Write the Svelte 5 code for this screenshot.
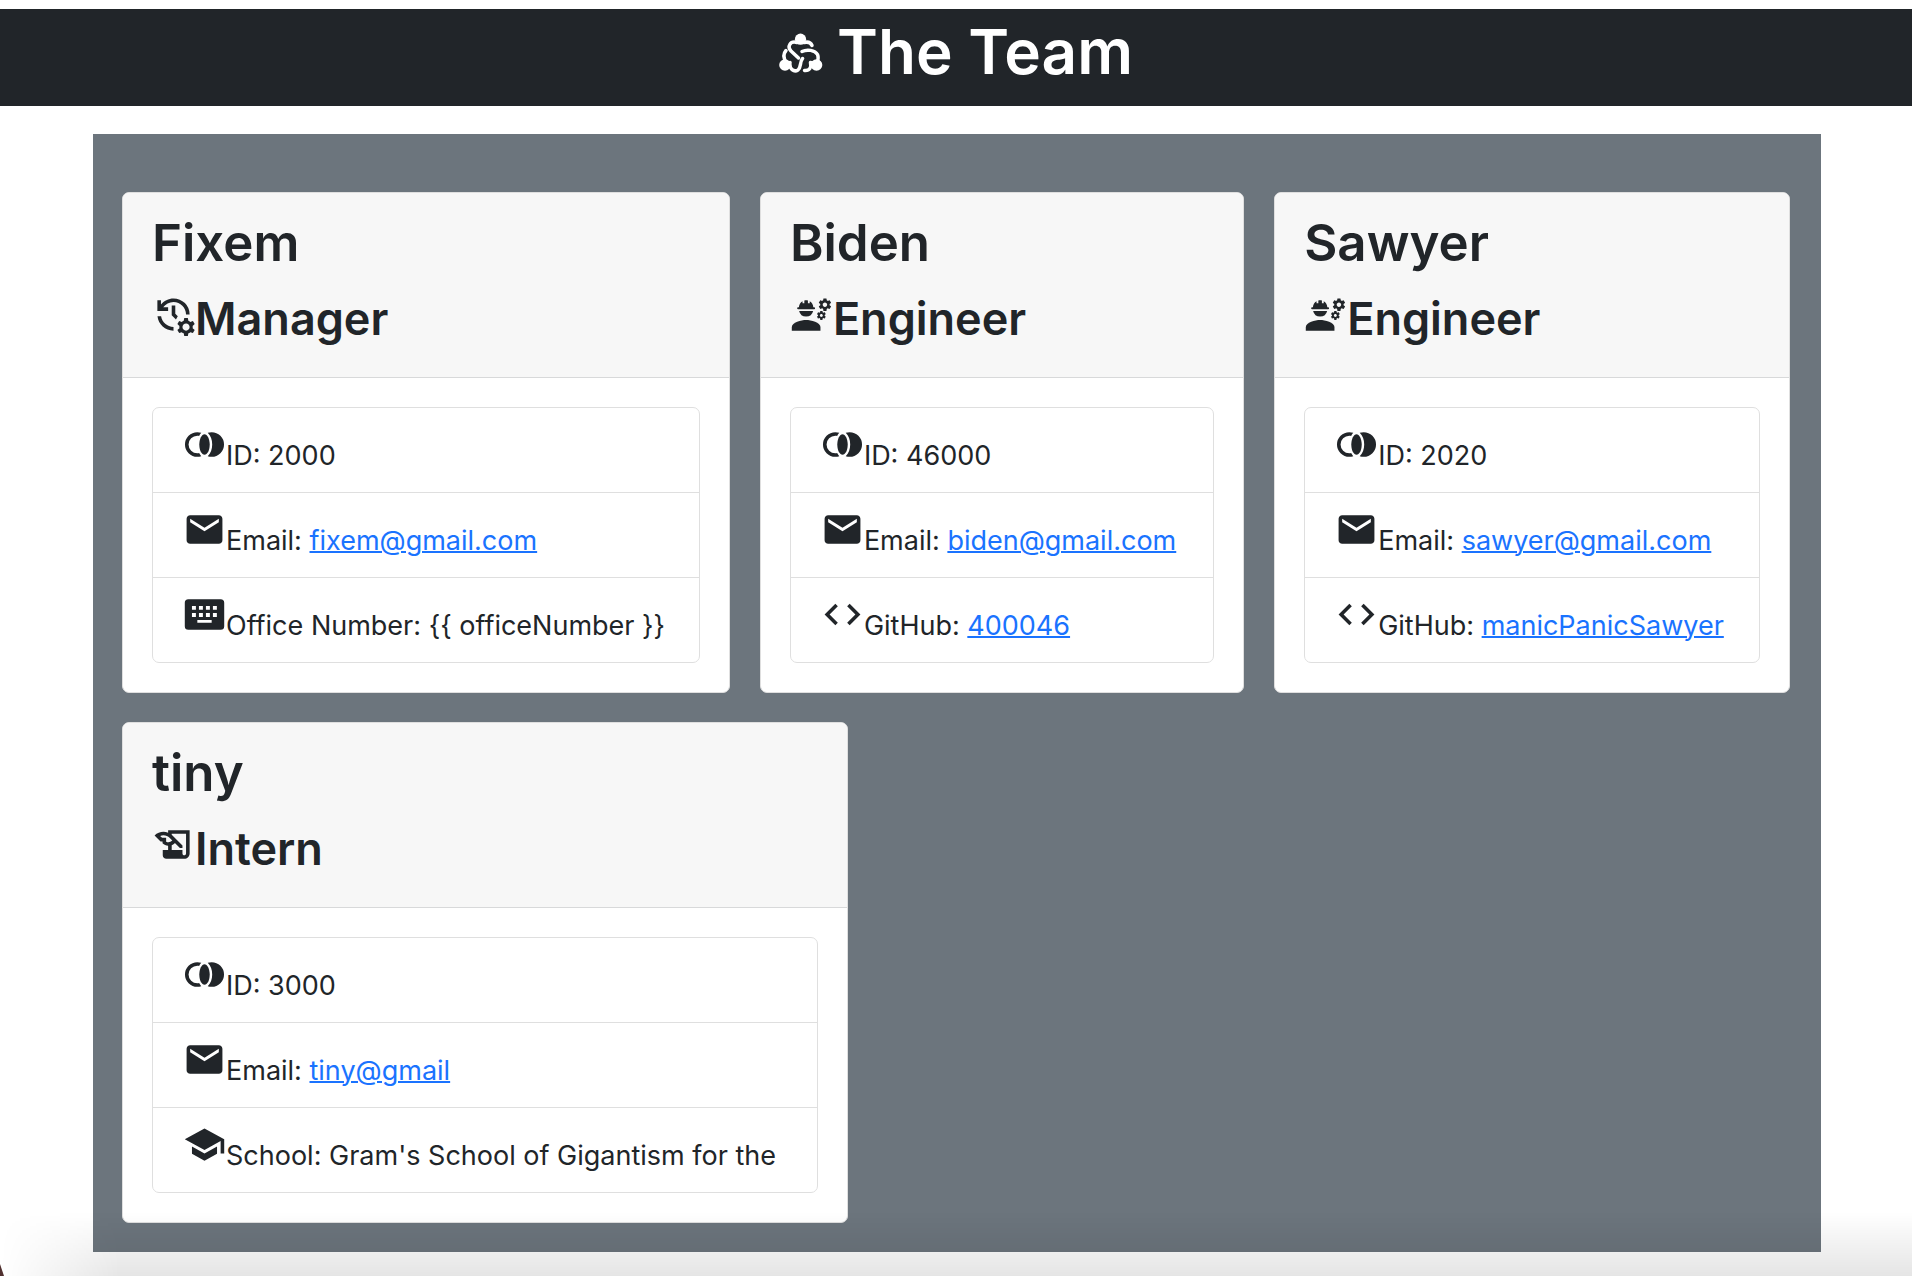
<script>
  const icons = {
    manager: [
      'M22.69 18.37l1.14-1-1-1.73-1.45.49c-.32-.27-.68-.48-1.08-.63L20 14h-2l-.3 1.49c-.4.15-.76.36-1.08.63l-1.45-.49-1 1.73 1.14 1c-.08.5-.08.76 0 1.26l-1.14 1 1 1.73 1.45-.49c.32.27.68.48 1.08.63L18 24h2l.3-1.49c.4-.15.76-.36 1.08-.63l1.45.49 1-1.73-1.14-1c.08-.51.08-.77 0-1.27zM19 21c-1.1 0-2-.9-2-2s.9-2 2-2 2 .9 2 2-.9 2-2 2z',
      'M11 7v5.41l2.36 2.36 1.04-1.79-1.4-1.39V7h-2zm10 5a9 9 0 0 0-9-9C9.17 3 6.65 4.32 5 6.36V4H3v6h6V8H6.26C7.53 6.19 9.63 5 12 5c3.86 0 7 3.14 7 7h2zm-9 6.98c-3.5-.1-6.4-2.6-6.92-5.98H3.06c.5 4.5 4.31 8 8.94 8z'
    ],
    engineer: [
      'M9 15c-2.67 0-8 1.34-8 4v2h16v-2c0-2.66-5.33-4-8-4z',
      'M22.1 6.84c.01-.11.02-.22.02-.34s-.01-.23-.03-.34l.74-.58c.07-.05.08-.15.04-.22l-.7-1.21c-.04-.08-.14-.1-.21-.08l-.86.35c-.18-.14-.38-.25-.59-.34l-.13-.93c-.02-.09-.09-.15-.18-.15h-1.4c-.09 0-.16.06-.17.15l-.13.93c-.21.09-.41.21-.59.34l-.87-.35c-.08-.03-.17 0-.21.08l-.7 1.21c-.04.08-.03.17.04.22l.74.58c-.02.11-.03.23-.03.34s.01.23.03.34l-.74.58c-.07.05-.08.15-.04.22l.7 1.21c.04.08.14.1.21.08l.87-.35c.18.14.38.25.59.34l.13.93c.01.09.08.15.17.15h1.4c.09 0 .16-.06.17-.15l.13-.93c.21-.09.41-.21.59-.34l.87.35c.08.03.17 0 .21-.08l.7-1.21c.04-.08.03-.17-.04-.22l-.73-.58zm-2.6.91c-.69 0-1.25-.56-1.25-1.25s.56-1.25 1.25-1.25 1.25.56 1.25 1.25-.56 1.25-1.25 1.25z',
      'M19.92 11.68l-.5-.87c-.03-.06-.1-.08-.15-.06l-.62.25c-.13-.1-.27-.18-.42-.24l-.09-.66c-.02-.06-.08-.1-.14-.1h-1c-.06 0-.11.04-.12.11l-.09.66c-.15.06-.29.15-.42.24l-.62-.25c-.06-.02-.12 0-.15.06l-.5.87c-.03.06-.02.12.03.16l.53.41c-.01.08-.02.16-.02.24 0 .08.01.17.02.24l-.53.41c-.05.04-.06.11-.03.16l.5.87c.03.06.1.08.15.06l.62-.25c.13.1.27.18.42.24l.09.66c.01.07.06.11.12.11h1c.06 0 .12-.04.12-.11l.09-.66c.15-.06.29-.15.42-.24l.62.25c.06.02.12 0 .15-.06l.5-.87c.03-.06.02-.12-.03-.16l-.52-.41c.01-.08.02-.16.02-.24 0-.08-.01-.17-.02-.24l.53-.41c.05-.04.06-.11.04-.17zm-2.42 1.65c-.46 0-.83-.38-.83-.83 0-.46.38-.83.83-.83s.83.38.83.83c0 .46-.37.83-.83.83z',
      'M4.5 9a.5.5 0 0 1 0-1H5c0-1.48.81-2.75 2-3.45v1.2h1V4.14c.32-.08.65-.14 1-.14s.68.06 1 .14v1.61h1v-1.2c1.19.7 2 1.97 2 3.45h.5a.5.5 0 0 1 0 1z',
      'M5.1 10h7.8a4 4 0 0 1-7.8 0z'
    ],
    intern: [
      'M9 4v1.38c-.83-.33-1.72-.5-2.61-.5-1.79 0-3.58.68-4.95 2.05l3.33 3.33h1.11v1.11c.86.86 1.98 1.31 3.11 1.36V15H6v3c0 1.1.9 2 2 2h10c1.66 0 3-1.34 3-3V4H9zm-1.11 6.41V8.26H5.61L4.57 7.22a5.07 5.07 0 0 1 1.82-.34c1.34 0 2.59.52 3.54 1.46l1.41 1.41-.2.2a2.7 2.7 0 0 1-1.92.8c-.47 0-.93-.12-1.33-.34zM19 17c0 .55-.45 1-1 1s-1-.45-1-1v-2h-6v-2.59c.57-.23 1.1-.57 1.56-1.03l.2-.2L15.59 14H17v-1.41l-6-5.97V6h8v11z'
    ],
    id: [
      'M12 6.26c1.5 0 2.9 2.4 2.9 5.74s-1.4 5.74-2.9 5.74-2.9-2.4-2.9-5.74 1.4-5.74 2.9-5.74z',
      'M16 5.1c-.8 0-1.5.1-2.2.4 1.7 1.6 2.5 4 2.5 6.5s-.8 4.9-2.5 6.5c.7.3 1.4.4 2.2.4a6.9 6.9 0 0 0 0-13.8z',
      'M10.2 5.5A7 7 0 0 0 8 5.1a6.9 6.9 0 0 0 0 13.8c.8 0 1.5-.1 2.2-.4-.5-.5-.9-1.1-1.2-1.7-.3.1-.6.1-1 .1a4.9 4.9 0 0 1 0-9.8c.4 0 .7 0 1 .1.3-.6.7-1.2 1.2-1.7z'
    ],
    email: [
      'M20 4H4c-1.1 0-1.99.9-1.99 2L2 18c0 1.1.9 2 2 2h16c1.1 0 2-.9 2-2V6c0-1.1-.9-2-2-2zm0 4l-8 5-8-5V6l8 5 8-5v2z'
    ],
    office: [
      'M3 3.5h18a2 2 0 0 1 2 2v13a2 2 0 0 1-2 2H3a2 2 0 0 1-2-2v-13a2 2 0 0 1 2-2zM5 7.2v2.2h2.2V7.2zm3.9 0v2.2h2.2V7.2zm3.9 0v2.2H15V7.2zm3.9 0v2.2h2.2V7.2zM5 11.2v2.2h2.2v-2.2zm3.9 0v2.2h2.2v-2.2zm3.9 0v2.2H15v-2.2zm3.9 0v2.2h2.2v-2.2zM8 15.1v1.5h8v-1.5z'
    ],
    github: [
      'M9.4 16.6L4.8 12l4.6-4.6L8 6l-6 6 6 6 1.4-1.4zm5.2 0l4.6-4.6-4.6-4.6L16 6l6 6-6 6-1.4-1.4z'
    ],
    school: [
      'M5 13.18v4L12 21l7-3.82v-4L12 17l-7-3.82zM12 3L1 9l11 6 9-4.91V17h2V9L12 3z'
    ]
  };

  const mail = (address) => ({ icon: 'email', label: 'Email', value: address, href: `mailto:${address}` });
  const hub = (user) => ({ icon: 'github', label: 'GitHub', value: user, href: `https://github.com/${user}` });

  // share: part of the board's inner width that the card takes, in percent
  const team = [
    {
      name: 'Fixem', role: 'Manager', icon: 'manager', share: 36.4,
      rows: [
        { icon: 'id', label: 'ID', value: '2000' },
        mail('fixem@gmail.com'),
        { icon: 'office', label: 'Office Number', value: '{{ officeNumber }}' }
      ]
    },
    {
      name: 'Biden', role: 'Engineer', icon: 'engineer', share: 29,
      rows: [{ icon: 'id', label: 'ID', value: '46000' }, mail('biden@gmail.com'), hub('400046')]
    },
    {
      name: 'Sawyer', role: 'Engineer', icon: 'engineer', share: 30.9,
      rows: [{ icon: 'id', label: 'ID', value: '2020' }, mail('sawyer@gmail.com'), hub('manicPanicSawyer')]
    },
    {
      name: 'tiny', role: 'Intern', icon: 'intern', share: 43.5,
      rows: [
        { icon: 'id', label: 'ID', value: '3000' },
        mail('tiny@gmail'),
        { icon: 'school', label: 'School', value: "Gram's School of Gigantism for the" }
      ]
    }
  ];
</script>

{#snippet glyph(name)}
  <svg class="icon" viewBox="0 0 24 24" aria-hidden="true">
    {#each icons[name] as d}<path {d} fill-rule="evenodd" />{/each}
  </svg>
{/snippet}

<header class="banner">
  <h1>
    <svg class="logo" viewBox="0 0 44 40" aria-hidden="true">
      <circle cx="21.5" cy="6.2" r="5.6" />
      <circle cx="6" cy="32" r="5.8" />
      <circle cx="37.5" cy="32" r="5.8" />
      <path d="M18 9.5C11 7.500 8 13.500 12 18L19.500 25" />
      <path d="M25 9.500C29 8.500 32 10 33 12.500" />
      <path d="M23 18.500C28 16 36 17 38.500 21.500C40 25 39 28 38 31" />
      <path d="M37 31L31.500 29.500C32.500 34 31 38 25.500 37.500" />
      <path d="M7 17.500C4 21 4.500 25 7 29" />
      <path d="M7 32L11 29.500C10 36 15 39.500 19 37C22.500 34 20.500 29.500 23.500 25.500" />
    </svg>
    The Team
  </h1>
</header>

<main class="board">
  {#each team as member}
    <article class="card" style:flex-basis="{member.share}%">
      <div class="card-head">
        <h2>{member.name}</h2>
        <h3>{@render glyph(member.icon)}{member.role}</h3>
      </div>
      <ul class="facts">
        {#each member.rows as row}
          <li>
            {@render glyph(row.icon)}
            <span>{row.label}: {#if row.href}<a href={row.href}>{row.value}</a>{:else}{row.value}{/if}</span>
          </li>
        {/each}
      </ul>
    </article>
  {/each}
</main>
<div class="shade"></div>
<div class="corner"></div>

<style>
  :global(body) {
    background: #fff;
    color: #212529;
    font-family: Inter, 'Liberation Sans', sans-serif;
    font-size: 27px;
    line-height: 42px;
  }
  h1, h2, h3, ul { margin: 0; padding: 0; font-weight: 600; }
  .banner {
    margin-top: 9px;
    padding: 0 30px 11px;
    background: #212529;
    color: #fff;
  }
  h1 {
    display: flex;
    justify-content: center;
    align-items: center;
    gap: 14px;
    font-size: 62px;
    line-height: 86px;
  }
  .logo { width: 44px; height: 40px; margin-top: 2px; fill: currentColor; }
  .logo path {
    fill: none;
    stroke: currentColor;
    stroke-width: 3.5;
    stroke-linecap: round;
    stroke-linejoin: round;
  }
  .board {
    display: flex;
    flex-wrap: wrap;
    align-items: flex-start;
    gap: 29px 30px;
    margin: 28px 91px 24px 93px;
    padding: 58px 29px 29px;
    background: #6c757d;
  }
  .card {
    box-sizing: border-box;
    overflow: hidden;
    border: 1px solid #dfdfdf;
    border-radius: 7px;
    background: #fff;
  }
  .card-head {
    padding: 15px 29px 29px;
    border-bottom: 1px solid #d8d9da;
    background: #f7f7f7;
  }
  h2 { font-size: 51px; line-height: 70px; }
  h3 {
    display: flex;
    align-items: flex-start;
    margin-top: 12px;
    font-size: 45px;
    line-height: 58px;
  }
  .icon { flex: none; width: 43px; height: 43px; fill: currentColor; }
  h3 .icon { margin-top: 3px; }
  .facts {
    margin: 29px;
    border: 1px solid #dfdfdf;
    border-radius: 7px;
    list-style: none;
  }
  li {
    display: flex;
    align-items: flex-start;
    padding: 15px 29px 15px 30px;
    font-weight: 400;
  }
  li + li { border-top: 1px solid #dfdfdf; }
  li span { padding-top: 12px; white-space: nowrap; }
  a { color: #1a73ff; text-decoration-thickness: 2px; }
  .shade {
    position: fixed;
    inset: auto 0 0;
    height: 64px;
    background: linear-gradient(rgba(0, 0, 0, 0), rgba(0, 0, 0, 0.1));
    mask-image: linear-gradient(to right, transparent, #000 120px);
    pointer-events: none;
  }
  .corner {
    position: fixed;
    left: 0;
    bottom: 0;
    width: 4px;
    height: 12px;
    background: #50302f;
    clip-path: polygon(0 0, 100% 100%, 0 100%);
  }
</style>
